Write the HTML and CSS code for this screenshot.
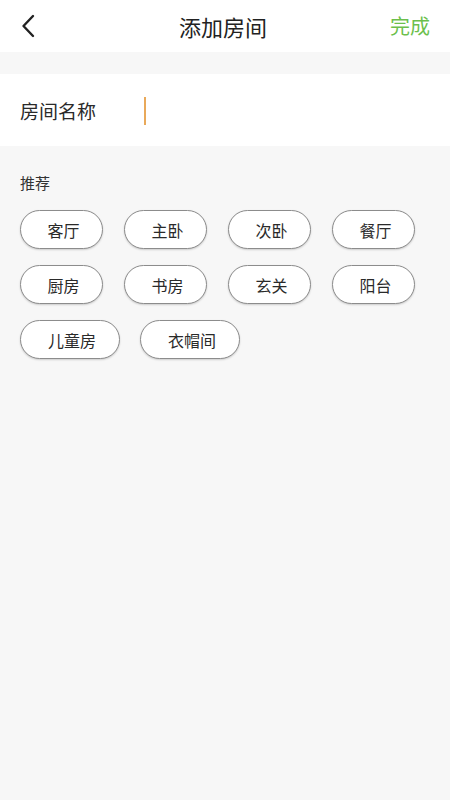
FILE: index.html
```html
<!DOCTYPE html>
<html lang="zh">
<head>
<meta charset="utf-8">
<link rel="stylesheet" href="styles.css">
</head>
<body>
<div class="page">
  <header class="topbar">
    <span class="back">
      <svg width="14" height="24" viewBox="0 0 14 24"><path d="M12 2 L2.5 12 L12 22" fill="none" stroke="#222" stroke-width="2.4" stroke-linecap="round" stroke-linejoin="round"/></svg>
    </span>
    <h1 class="title">添加房间</h1>
    <span class="done">完成</span>
  </header>
  <div class="field">
    <span class="label">房间名称</span>
    <span class="cursor"></span>
  </div>
  <section class="rec">
    <div class="rec-title">推荐</div>
    <div class="chips">
      <span class="chip">客厅</span>
      <span class="chip">主卧</span>
      <span class="chip">次卧</span>
      <span class="chip">餐厅</span>
      <span class="chip">厨房</span>
      <span class="chip">书房</span>
      <span class="chip">玄关</span>
      <span class="chip">阳台</span>
      <span class="chip wide">儿童房</span>
      <span class="chip wide">衣帽间</span>
    </div>
  </section>
</div>
</body>
</html>
```
FILE: styles.css
```css
html, body {
  margin: 0;
  padding: 0;
  background: #f7f7f7;
  font-family: "Noto Sans CJK SC", "Noto Sans", sans-serif;
}
.page {
  width: 450px;
  min-height: 800px;
  background: #f7f7f7;
}
.topbar {
  height: 52px;
  background: #fff;
  display: flex;
  align-items: center;
  justify-content: space-between;
  padding: 0 20px 0 21px;
  box-sizing: border-box;
  position: relative;
}
.back {
  display: flex;
  align-items: center;
  width: 40px;
}
.title {
  margin: 0;
  font-size: 22px;
  font-weight: 400;
  color: #222;
  position: absolute;
  left: 0;
  right: 4px;
  text-align: center;
  line-height: 52px;
  pointer-events: none;
}
.done {
  font-size: 20px;
  color: #6cbf4c;
  line-height: 52px;
}
.field {
  margin-top: 22px;
  height: 72px;
  background: #fff;
  display: flex;
  align-items: center;
  padding-left: 20px;
}
.label {
  font-size: 19px;
  color: #2a2a2a;
  width: 124px;
}
.cursor {
  width: 2px;
  height: 28px;
  background: #e9a95a;
  margin-top: 2px;
}
.rec {
  padding: 26px 20px 0 20px;
}
.rec-title {
  font-size: 15px;
  color: #333;
  line-height: 22px;
  margin-bottom: 16px;
}
.chips {
  display: grid;
  grid-template-columns: repeat(4, 83px);
  column-gap: 21px;
  row-gap: 16px;
}
.chip {
  height: 39px;
  box-sizing: border-box;
  border: 1px solid #8c8c8c;
  border-radius: 20px;
  background: #fff;
  box-shadow: 0 1px 2px rgba(0,0,0,0.18);
  display: flex;
  align-items: center;
  justify-content: center;
  font-size: 16px;
  color: #2a2a2a;
  padding-left: 4px;
}
.chip.wide {
  width: 100px;
}
.chip.wide:nth-child(10) {
  margin-left: 16px;
}
```
